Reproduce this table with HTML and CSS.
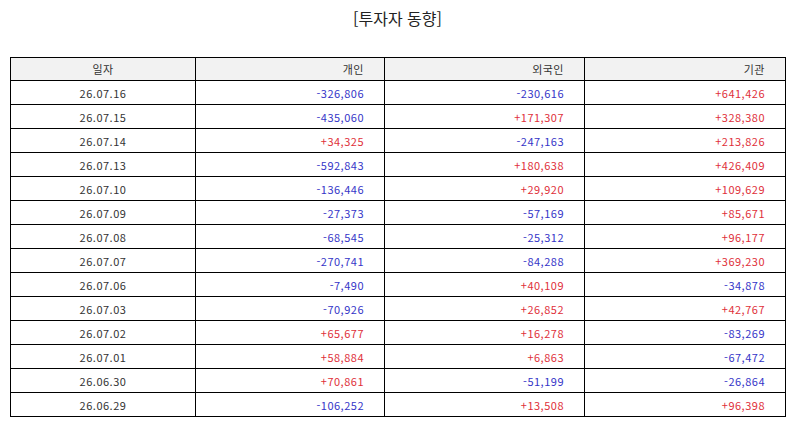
FILE: index.html
```html
<!DOCTYPE html>
<html lang="ko">
<head>
<meta charset="utf-8">
<link rel="stylesheet" href="styles.css">
</head>
<body>
<div class="page">
  <h1 class="title">[투자자 동향]</h1>
  <table class="trend">
    <colgroup>
      <col class="c-date"><col class="c-ind"><col class="c-for"><col class="c-inst">
    </colgroup>
    <thead>
      <tr><th class="center">일자</th><th>개인</th><th>외국인</th><th>기관</th></tr>
    </thead>
    <tbody>
      <tr><td class="center">26.07.16</td><td class="dn">-326,806</td><td class="dn">-230,616</td><td class="up">+641,426</td></tr>
      <tr><td class="center">26.07.15</td><td class="dn">-435,060</td><td class="up">+171,307</td><td class="up">+328,380</td></tr>
      <tr><td class="center">26.07.14</td><td class="up">+34,325</td><td class="dn">-247,163</td><td class="up">+213,826</td></tr>
      <tr><td class="center">26.07.13</td><td class="dn">-592,843</td><td class="up">+180,638</td><td class="up">+426,409</td></tr>
      <tr><td class="center">26.07.10</td><td class="dn">-136,446</td><td class="up">+29,920</td><td class="up">+109,629</td></tr>
      <tr><td class="center">26.07.09</td><td class="dn">-27,373</td><td class="dn">-57,169</td><td class="up">+85,671</td></tr>
      <tr><td class="center">26.07.08</td><td class="dn">-68,545</td><td class="dn">-25,312</td><td class="up">+96,177</td></tr>
      <tr><td class="center">26.07.07</td><td class="dn">-270,741</td><td class="dn">-84,288</td><td class="up">+369,230</td></tr>
      <tr><td class="center">26.07.06</td><td class="dn">-7,490</td><td class="up">+40,109</td><td class="dn">-34,878</td></tr>
      <tr><td class="center">26.07.03</td><td class="dn">-70,926</td><td class="up">+26,852</td><td class="up">+42,767</td></tr>
      <tr><td class="center">26.07.02</td><td class="up">+65,677</td><td class="up">+16,278</td><td class="dn">-83,269</td></tr>
      <tr><td class="center">26.07.01</td><td class="up">+58,884</td><td class="up">+6,863</td><td class="dn">-67,472</td></tr>
      <tr><td class="center">26.06.30</td><td class="up">+70,861</td><td class="dn">-51,199</td><td class="dn">-26,864</td></tr>
      <tr><td class="center">26.06.29</td><td class="dn">-106,252</td><td class="up">+13,508</td><td class="up">+96,398</td></tr>
    </tbody>
  </table>
</div>
</body>
</html>
```
FILE: styles.css
```css
html, body {
  margin: 0;
  padding: 0;
  background: #ffffff;
}
body {
  font-family: "Noto Sans CJK KR", "Noto Sans", sans-serif;
  color: #333333;
}
.page {
  padding: 5px 10px 0 10px;
}
.title {
  margin: 0;
  height: 52px;
  font-size: 16px;
  font-weight: normal;
  line-height: 26px;
  text-align: center;
  color: #222222;
}
.trend {
  width: 775px;
  border-collapse: collapse;
  table-layout: fixed;
  font-size: 11px;
  letter-spacing: 0.5px;
}
.c-date { width: 185px; }
.c-ind { width: 189px; }
.c-for { width: 200px; }
.c-inst { width: 201px; }
.trend th,
.trend td {
  border: 1px solid #000000;
  height: 24px;
  padding: 0 20px;
  text-align: right;
  font-weight: normal;
  line-height: 14px;
  box-sizing: border-box;
}
.trend thead th {
  background: #f2f2f2;
  height: 23px;
}
.trend .center {
  text-align: center;
}
.up { color: #e0303a; }
.dn { color: #3535c8; }
```
